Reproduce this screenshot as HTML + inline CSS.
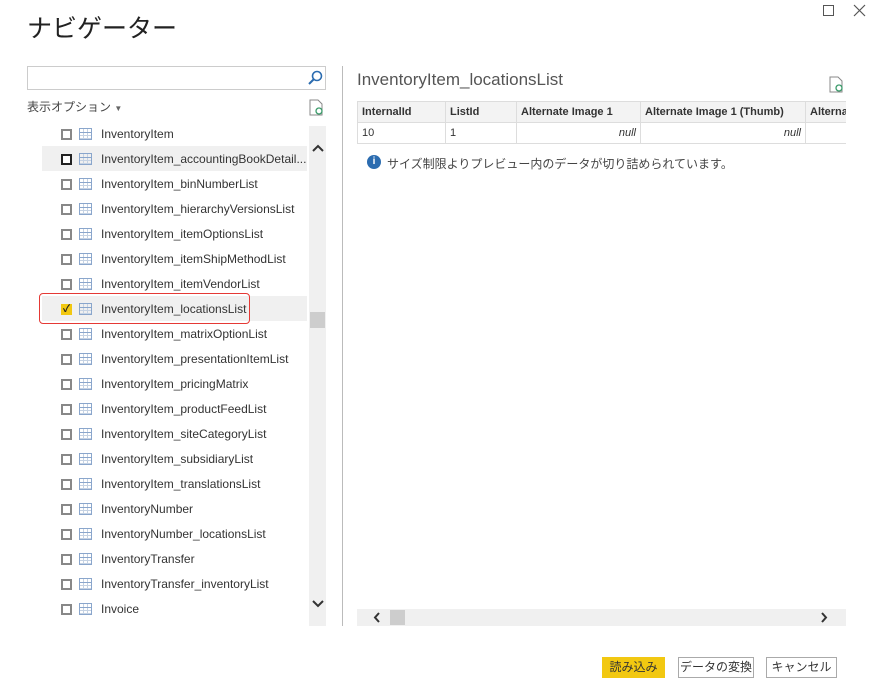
<!DOCTYPE html>
<html><head><meta charset="utf-8"><style>
*{margin:0;padding:0;box-sizing:border-box}
body{width:872px;height:694px;background:#fff;position:relative;overflow:hidden;font-family:"Liberation Sans","Noto Sans CJK JP",sans-serif;color:#333}
.a{position:absolute}
.row{position:absolute;left:42px;width:265px;height:25px;font-size:12px;line-height:25px;color:#333}
.cb{position:absolute;left:19px;top:8px;width:11px;height:11px;border:2px solid #888;background:#fff}
.ti{position:absolute;left:37px;top:7px;width:13px;height:12px;border:1px solid #8aa6cc;background:
linear-gradient(#8aa6cc,#8aa6cc) 0 3px/100% 1px no-repeat,
linear-gradient(#c5d2e3,#c5d2e3) 0 6px/100% 1px no-repeat,
linear-gradient(#c5d2e3,#c5d2e3) 0 9px/100% 1px no-repeat,
linear-gradient(#c5d2e3,#c5d2e3) 3px 0/1px 100% no-repeat,
linear-gradient(#c5d2e3,#c5d2e3) 7px 0/1px 100% no-repeat}
.tx{position:absolute;left:59px;top:1px;white-space:nowrap}
table{border-collapse:collapse;font-size:11px}
td,th{border:1px solid #ddd;height:21px;padding:0 4px;text-align:left}
th{background:#f3f3f3;font-weight:bold;color:#333}
.btn{position:absolute;height:21px;border:1px solid #aaa;font-size:12px;line-height:19px;text-align:center;background:#fff;color:#333}
</style></head><body>
<div class="a" style="left:27px;top:9px;font-size:25px;color:#222">ナビゲーター</div>
<div class="a" style="left:823px;top:5px;width:11px;height:11px;border:1px solid #555"></div>
<svg class="a" style="left:853px;top:4px" width="13" height="13"><path d="M1 1l11 11M12 1L1 12" stroke="#555" stroke-width="1.2"/></svg>

<div class="a" style="left:27px;top:66px;width:299px;height:24px;border:1px solid #ccc"></div>
<svg class="a" style="left:307px;top:70px" width="16" height="16"><circle cx="10" cy="6" r="4.5" fill="none" stroke="#2b6cb0" stroke-width="1.6"/><line x1="6.5" y1="9.5" x2="2" y2="14" stroke="#2b6cb0" stroke-width="2"/></svg>
<div class="a" style="left:27px;top:98px;font-size:12px;color:#444">表示オプション <span style="font-size:8px;color:#666">▼</span></div>
<svg class="a" style="left:309px;top:99px" width="16" height="18"><path d="M1 1h8l4 4v11H1z" fill="none" stroke="#888"/><circle cx="10" cy="12" r="3" fill="none" stroke="#3a9b6a" stroke-width="1.3"/></svg>

<div class="a" style="left:42px;top:146px;width:265px;height:25px;background:#f0f0f0"></div>
<div class="a" style="left:42px;top:296px;width:265px;height:25px;background:#f0f0f0"></div>
<div class="a" style="left:39px;top:293px;width:211px;height:31px;border:1px solid #e53935;border-radius:4px"></div>

<div class="row" style="top:121px"><div class="cb"></div><div class="ti"></div><div class="tx">InventoryItem</div></div>
<div class="row" style="top:146px"><div class="cb" style="border-color:#222"></div><div class="ti"></div><div class="tx">InventoryItem_accountingBookDetail...</div></div>
<div class="row" style="top:171px"><div class="cb"></div><div class="ti"></div><div class="tx">InventoryItem_binNumberList</div></div>
<div class="row" style="top:196px"><div class="cb"></div><div class="ti"></div><div class="tx">InventoryItem_hierarchyVersionsList</div></div>
<div class="row" style="top:221px"><div class="cb"></div><div class="ti"></div><div class="tx">InventoryItem_itemOptionsList</div></div>
<div class="row" style="top:246px"><div class="cb"></div><div class="ti"></div><div class="tx">InventoryItem_itemShipMethodList</div></div>
<div class="row" style="top:271px"><div class="cb"></div><div class="ti"></div><div class="tx">InventoryItem_itemVendorList</div></div>
<div class="row" style="top:296px"><div class="cb" style="border:none;background:#f2c811;font-size:10px;line-height:11px;text-align:center;color:#222;font-weight:bold">✓</div><div class="ti"></div><div class="tx">InventoryItem_locationsList</div></div>
<div class="row" style="top:321px"><div class="cb"></div><div class="ti"></div><div class="tx">InventoryItem_matrixOptionList</div></div>
<div class="row" style="top:346px"><div class="cb"></div><div class="ti"></div><div class="tx">InventoryItem_presentationItemList</div></div>
<div class="row" style="top:371px"><div class="cb"></div><div class="ti"></div><div class="tx">InventoryItem_pricingMatrix</div></div>
<div class="row" style="top:396px"><div class="cb"></div><div class="ti"></div><div class="tx">InventoryItem_productFeedList</div></div>
<div class="row" style="top:421px"><div class="cb"></div><div class="ti"></div><div class="tx">InventoryItem_siteCategoryList</div></div>
<div class="row" style="top:446px"><div class="cb"></div><div class="ti"></div><div class="tx">InventoryItem_subsidiaryList</div></div>
<div class="row" style="top:471px"><div class="cb"></div><div class="ti"></div><div class="tx">InventoryItem_translationsList</div></div>
<div class="row" style="top:496px"><div class="cb"></div><div class="ti"></div><div class="tx">InventoryNumber</div></div>
<div class="row" style="top:521px"><div class="cb"></div><div class="ti"></div><div class="tx">InventoryNumber_locationsList</div></div>
<div class="row" style="top:546px"><div class="cb"></div><div class="ti"></div><div class="tx">InventoryTransfer</div></div>
<div class="row" style="top:571px"><div class="cb"></div><div class="ti"></div><div class="tx">InventoryTransfer_inventoryList</div></div>
<div class="row" style="top:596px"><div class="cb"></div><div class="ti"></div><div class="tx">Invoice</div></div>

<div class="a" style="left:309px;top:126px;width:17px;height:500px;background:#f0f0f0"></div>
<svg class="a" style="left:311px;top:143px" width="14" height="10"><path d="M2 8l5-5 5 5" fill="none" stroke="#333" stroke-width="2"/></svg>
<svg class="a" style="left:311px;top:599px" width="14" height="10"><path d="M2 2l5 5 5-5" fill="none" stroke="#333" stroke-width="2"/></svg>
<div class="a" style="left:310px;top:312px;width:15px;height:16px;background:#cdcdcd"></div>

<div class="a" style="left:342px;top:66px;width:1px;height:560px;background:#bbb"></div>
<div class="a" style="left:357px;top:70px;font-size:17px;color:#555">InventoryItem_locationsList</div>
<svg class="a" style="left:829px;top:76px" width="16" height="18"><path d="M1 1h8l4 4v11H1z" fill="none" stroke="#888"/><circle cx="10" cy="12" r="3" fill="none" stroke="#3a9b6a" stroke-width="1.3"/></svg>
<div class="a" style="left:357px;top:101px;width:489px;height:44px;overflow:hidden">
<table style="width:560px"><tr><th style="width:88px">InternalId</th><th style="width:71px">ListId</th><th style="width:124px">Alternate Image 1</th><th style="width:165px">Alternate Image 1 (Thumb)</th><th>Alternate</th></tr>
<tr><td>10</td><td>1</td><td style="text-align:right;font-style:italic">null</td><td style="text-align:right;font-style:italic">null</td><td></td></tr></table></div>
<div class="a" style="left:367px;top:155px;width:14px;height:14px;border-radius:50%;background:#2b6cb0;color:#fff;font-size:10px;font-weight:bold;text-align:center;line-height:14px">i</div>
<div class="a" style="left:387px;top:155px;font-size:12px;color:#444">サイズ制限よりプレビュー内のデータが切り詰められています。</div>

<div class="a" style="left:357px;top:609px;width:489px;height:17px;background:#f0f0f0"></div>
<div class="a" style="left:390px;top:610px;width:15px;height:15px;background:#cdcdcd"></div>
<svg class="a" style="left:372px;top:611px" width="10" height="13"><path d="M7 2L3 6.5 7 11" fill="none" stroke="#333" stroke-width="2"/></svg>
<svg class="a" style="left:819px;top:611px" width="10" height="13"><path d="M3 2l4 4.5L3 11" fill="none" stroke="#333" stroke-width="2"/></svg>

<div class="btn" style="left:602px;top:657px;width:63px;background:#f2c811;border-color:#f2c811">読み込み</div>
<div class="btn" style="left:678px;top:657px;width:76px">データの変換</div>
<div class="btn" style="left:766px;top:657px;width:71px">キャンセル</div>
</body></html>
